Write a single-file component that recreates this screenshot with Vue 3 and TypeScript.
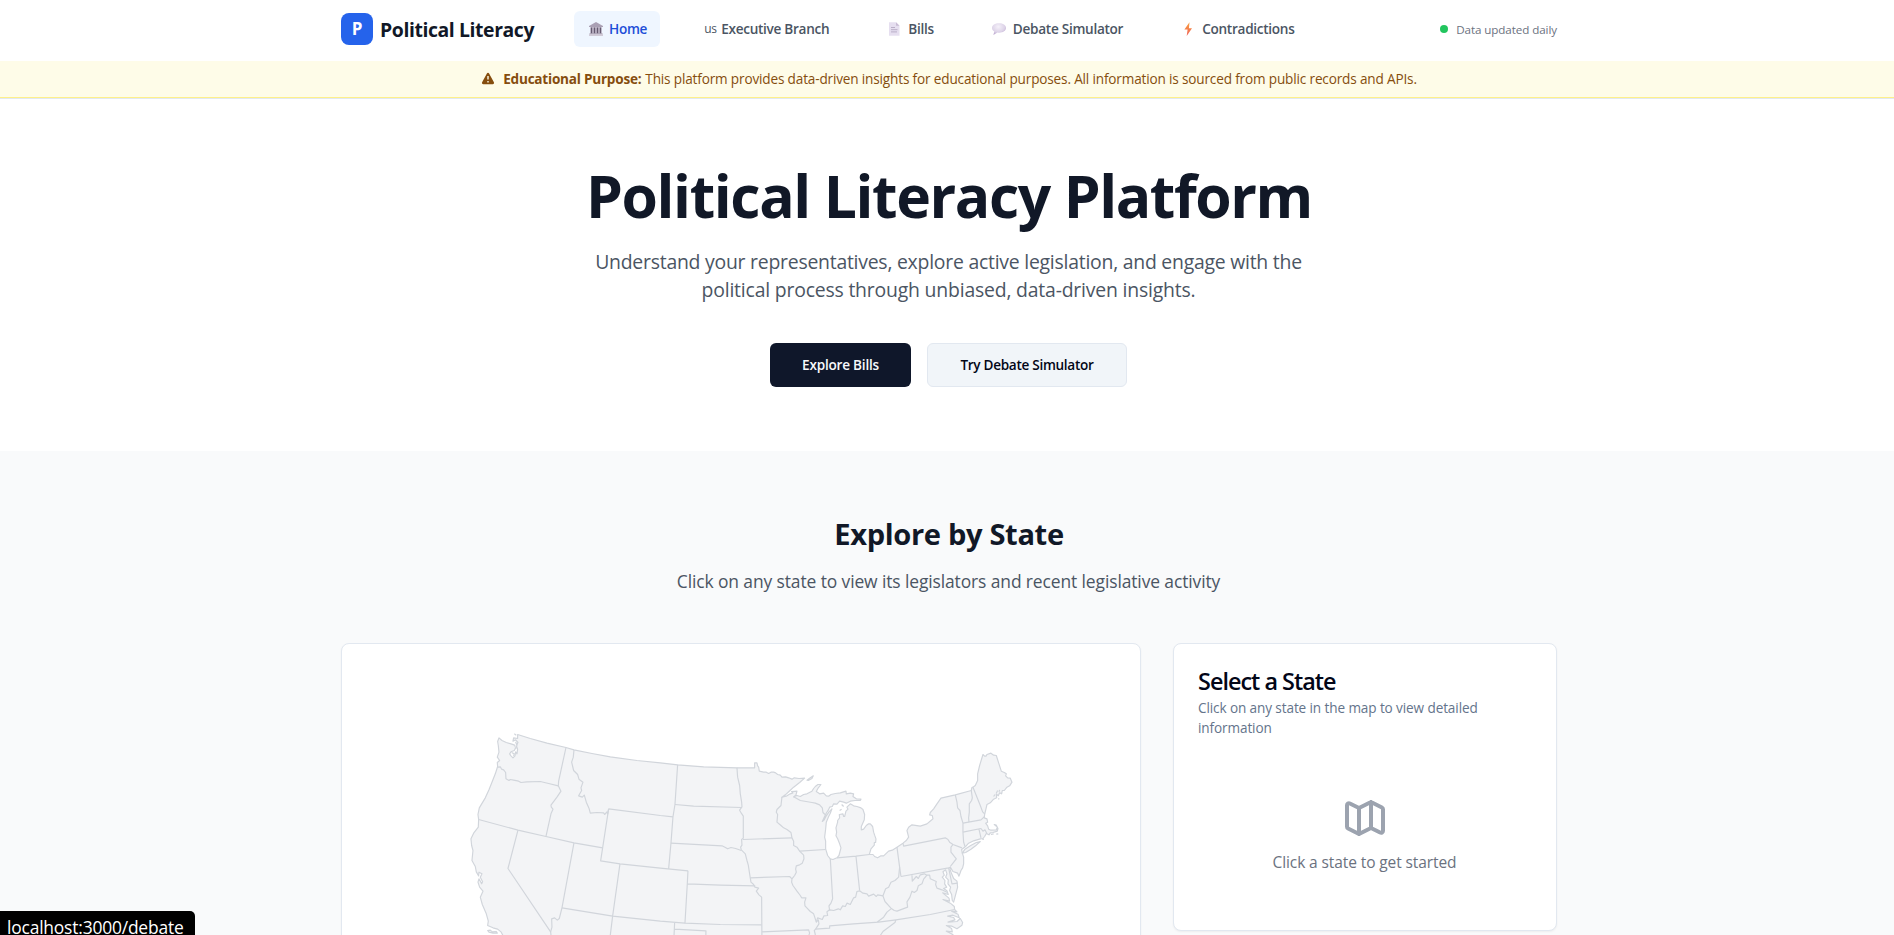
<script setup lang="ts">
interface NavItem {
  id: string
  label: string
  prefix?: string
  active?: boolean
}

const navItems: NavItem[] = [
  { id: 'home', label: 'Home', active: true },
  { id: 'executive', label: 'Executive Branch', prefix: 'us' },
  { id: 'bills', label: 'Bills' },
  { id: 'debate', label: 'Debate Simulator' },
  { id: 'contradictions', label: 'Contradictions' },
]

// Outline of the contiguous states, clockwise from the north-west corner.
const outline =
  'M172 72L210 84L260 98L317 111L341 118L395 129L450 139L530 150L600 157L652 163L730 169L830 172L883 172L883 157L890 157L892 166L895 170L897 182L910 185L918 185L925 189L932 185L940 185L946 187L952 192L960 194L965 200L976 199L985 202L995 206L1002 202L1016 204L1033 203L1018 216L1000 230L986 243L975 253L965 260L980 256L990 250L998 247L994 243L1010 242L1007 253L1000 259L1010 255L1020 258L1030 252L1040 250L1055 242L1060 234L1065 228L1073 222L1082 222L1074 232L1068 243L1078 250L1090 248L1098 256L1105 257L1112 252L1125 249L1140 247L1157 242L1158 250L1170 248L1180 250L1178 258L1188 265L1202 266L1200 270L1184 270L1170 272L1158 278L1150 275L1138 272L1130 281L1120 280L1116 288L1108 290L1104 299L1099 306L1094 316L1086 333L1092 328L1098 316L1106 304L1115 295L1110 308L1105 318L1098 335L1096 356L1093 380L1096 392L1096 415L1102 435L1110 445L1118 447L1130 442L1136 435L1142 412L1138 400L1132 385L1127 376L1129 365L1127 352L1132 335L1132 330L1138 322L1137 312L1148 310L1150 318L1153 318L1157 302L1163 296L1160 290L1170 280L1180 286L1190 288L1202 292L1208 297L1213 312L1212 328L1203 348L1203 358L1210 356L1218 345L1225 340L1230 340L1237 348L1240 365L1243 374L1247 385L1246 396L1242 396L1242 404L1232 415L1227 432L1238 432L1243 438L1252 442L1262 436L1270 436L1285 422L1296 419L1310 410L1328 398L1338 390L1345 380L1340 360L1345 350L1355 343L1380 347L1400 340L1412 330L1418 325L1416 315L1408 313L1410 306L1420 295L1430 280L1442 263L1485 253L1533 240L1535 231L1538 230L1545 225L1552 210L1552 190L1558 165L1568 132L1573 137L1577 137L1580 132L1592 128L1600 134L1608 135L1616 160L1623 182L1632 186L1638 190L1636 196L1642 202L1650 203L1655 215L1648 226L1640 230L1632 240L1626 240L1624 250L1618 247L1614 256L1608 250L1609 262L1600 266L1590 277L1580 282L1577 295L1573 312L1572 322L1580 325L1582 335L1576 338L1582 346L1585 356L1592 359L1608 358L1611 350L1602 342L1608 344L1613 354L1611 362L1598 366L1590 367L1586 373L1578 369L1573 378L1568 384L1560 385L1540 391L1525 398L1515 409L1504 417L1506 428L1510 440L1510 460L1507 472L1502 480L1500 486L1496 497L1492 488L1478 483L1470 470L1469 476L1474 490L1480 504L1490 512L1492 530L1488 545L1480 575L1476 570L1474 552L1468 540L1471 530L1463 520L1464 508L1456 500L1460 490L1456 478L1448 484L1452 494L1446 500L1454 510L1453 520L1459 530L1450 534L1460 541L1464 552L1447 547L1466 563L1468 572L1448 567L1470 578L1482 588L1483 597L1490 604L1474 602L1493 611L1497 622L1478 614L1462 617L1480 621L1484 628L1463 635L1490 633L1500 624L1507 636L1505 644L1490 655L1475 647L1458 645L1474 654L1476 664L1458 662L1478 672L1466 684L1450 720L150 720L128 675L122 664L112 656L98 652L82 645L84 632L78 610L66 582L60 560L68 542L58 530L53 515L56 505L64 520L67 514L60 500L65 490L56 485L55 496L48 484L45 468L35 450L38 420L34 405L32 385L40 368L54 350L55 327L53 312L57 292L75 262L86 238L95 215L105 190L112 168L111 156L118 150L111 140L116 125L114 105L112 93L116 82L125 90L138 96L152 100L163 104L166 112L162 120L152 124L148 130L152 136L158 142L164 136L166 124L170 130L172 116L168 106L173 96L166 88L158 92L160 82L172 84Z'

const islands = [
  'M1506 428L1514 416L1530 406L1548 396L1560 393L1548 404L1532 416L1516 426Z',
  'M1040 209L1050 202L1059 196L1055 204L1044 210Z',
  'M82 660L90 659L96 664L108 663L111 668L98 668L86 665Z',
  'M162 70L168 74M1592 372L1600 370M1608 371L1614 370M1566 387L1571 386M1614 264L1617 266M1144 282L1150 288M1138 300L1144 296',
  'M154 126L162 130L160 137M166 94L170 104L166 116M1608 248L1612 240M1616 244L1618 238M1600 258L1604 252',
]

const borders = [
  // Pacific and mountain states
  'M317 111L295 212L294 226L302 242L290 260L272 284L273 290L278 296L272 310L257 378',
  'M113 170L120 169L124 176L130 178L136 186L137 205L146 210L150 207L160 209L175 212L182 216L200 214L240 213L265 219L294 226',
  'M55 327L173 359L257 378L341 397L427 412',
  'M173 359L143 474L271 664L275 700',
  'M341 397L305 592L297 624L291 629L283 622L274 625L275 650L271 664',
  'M341 118L339 140L334 155L340 180L352 192L356 206L368 215L362 232L364 240L355 256L366 260L372 254L378 275L386 293L390 308L410 306L430 307L433 312L440 304L442 311L445 295',
  'M445 295L600 315L638 319M445 295L427 412L421 451L479 460L600 473L683 481',
  'M652 163L644 282L638 319L632 398L625 475M479 460L457 617L448 690',
  'M305 592L457 617L600 632L674 638L780 642L904 643',
  // Great Plains
  'M644 282L700 287L844 291M632 398L785 406L794 410L802 415L812 411L826 414L843 420M683 481L681 520L674 638M681 520L780 524L885 526',
  'M643 637L640 700M643 656L737 661L736 700',
  'M830 172L832 200L838 225L840 250L844 275L845 289L838 299L843 308L849 317L849 383L844 387L845 404L841 410L843 418',
  'M848 387L995 382M870 502L988 498L995 505',
  'M843 418L855 430L860 450L864 464L868 490L872 515L880 522L884 530L895 533L888 542L896 553L904 560L905 700M905 664L1045 658L1048 668L1040 690',
  // Upper Midwest and the Mississippi
  'M965 259L962 285L950 297L948 305L952 312L950 335L962 345L970 352L980 357L992 366L995 382L1000 392L1000 405L1010 410L1018 422L1030 434L1031 445L1026 458L1018 463L1008 466L1006 476L1008 485L1003 495L995 505L994 515L998 525L1010 542L1020 555L1024 562L1037 562L1033 575L1034 586L1050 603L1060 610L1064 622L1068 635L1074 628L1076 640L1066 656L1062 660L1065 672L1058 700',
  'M1018 422L1096 417M1000 259L1020 270L1055 276L1065 278L1078 283L1086 292L1088 306L1094 312',
  'M1110 445L1117 565L1112 578L1106 586L1108 600M1187 437L1198 540M1130 442L1187 437L1227 432M1310 410L1318 470L1322 498',
  'M1068 635L1072 622L1086 627L1091 616L1102 615L1100 604L1108 598L1120 600L1134 595L1140 598L1147 586L1155 588L1160 578L1170 582L1180 562L1186 560L1190 543L1198 541L1208 548L1220 550L1225 557L1240 551L1248 558L1252 553L1268 556L1276 535L1285 530L1292 515L1304 510L1315 500L1318 470',
  // Appalachia and the Mid-Atlantic
  'M1268 556L1274 573L1292 593L1302 600L1310 602L1328 595L1342 590L1340 574L1349 560L1355 542L1362 546L1370 540L1374 526L1385 520L1390 506L1400 494',
  'M1292 595L1280 605L1270 620L1250 635M1065 656L1108 653L1108 646L1180 640L1255 635L1307 628L1410 612L1483 597M1307 628L1304 636L1285 650L1268 663L1250 690',
  'M1328 398L1330 407L1455 382L1463 387L1468 395L1478 402L1505 412M1478 402L1472 410L1472 425L1488 445L1478 458L1470 468',
  'M1322 498L1465 472L1469 470M1465 472L1475 520L1492 518M1355 494L1356 512L1368 498L1374 504L1380 493L1392 490L1400 494L1408 494L1410 505L1428 513L1426 522L1430 533L1445 538L1460 545',
  // New England
  'M1485 253L1490 275L1492 292L1499 300L1502 318L1508 338L1508 365L1510 395L1514 408M1533 240L1536 262L1534 270L1527 280L1527 305L1525 322L1526 335',
  'M1508 338L1562 328L1573 318M1508 365L1562 354L1568 362L1574 358L1580 370M1556 356L1562 382M1538 230L1560 285L1567 304L1573 310',
]
</script>

<template>
  <div class="app">
    <div class="page">
      <header class="header">
        <div class="container header-row">
          <div class="brand">
            <span class="brand-mark">P</span>
            <span class="brand-name">Political Literacy</span>
          </div>
          <nav class="nav">
            <a v-for="item in navItems" :key="item.id" class="nav-item" :class="{ active: item.active }">
              <span v-if="item.prefix" class="nav-prefix">{{ item.prefix }}</span>
              <svg v-else-if="item.id === 'home'" class="nav-icon" viewBox="0 0 19 16">
                <path d="M3 6V5l7-4 7 4v1z" fill="#aaa0b4" />
                <path d="M4.500 6h11v6.500h-11z" fill="#c8c0d0" />
                <path d="M5.500 6.500v6M8.500 6.500v6M11.500 6.500v6M14.500 6.500v6" stroke="#655a70" stroke-width="1.500" />
                <path d="M3.500 12.300h13v1h-13z" fill="#a59bac" />
                <path d="M3 13.300h14v1.500H3z" fill="#c9c1cd" />
              </svg>
              <svg v-else-if="item.id === 'bills'" class="nav-icon" viewBox="0 0 19 16">
                <path d="M4 1.200h7l3.500 3.600v9.900H4z" fill="#e6dff0" />
                <path d="M11 1.200v3.600h3.500z" fill="#c9bdd5" />
                <path d="M6 6.500h4M6 8.700h6.500M6 10.900h6" stroke="#b9aec7" />
              </svg>
              <svg v-else-if="item.id === 'debate'" class="nav-icon" viewBox="0 0 19 16">
                <defs>
                  <radialGradient id="bubble" cx=".45" cy=".3" r=".7">
                    <stop offset="0" stop-color="#f5f1f9" />
                    <stop offset=".65" stop-color="#ddd3e8" />
                    <stop offset="1" stop-color="#b9a4cc" />
                  </radialGradient>
                </defs>
                <path d="M9 2.300c4 0 7 2 7 4.700s-3 4.700-7 4.700l-1.600-.1-4 2.400.9-3.500C2.800 9.600 2 8.400 2 7c0-2.700 3-4.700 7-4.700z" fill="url(#bubble)" />
              </svg>
              <svg v-else class="nav-icon" viewBox="0 0 19 16">
                <defs>
                  <linearGradient id="bolt" x1="0" y1="0" x2="0" y2="1">
                    <stop offset="0" stop-color="#f9a13c" />
                    <stop offset="1" stop-color="#f0605a" />
                  </linearGradient>
                </defs>
                <path d="M10.500 1.200 5.400 8.500h3.200L7.700 15 13 7.300H9.900z" fill="url(#bolt)" />
              </svg>
              <span>{{ item.label }}</span>
            </a>
          </nav>
          <div class="status"><i class="dot"></i><span>Data updated daily</span></div>
        </div>
      </header>

      <div class="notice">
        <svg class="notice-icon" viewBox="0 0 14 14">
          <path d="M7 .8c.5 0 .9.200 1.100.6l4.800 8.800c.5.900-.1 2-1.200 2H2.300c-1.100 0-1.700-1.100-1.200-2l4.800-8.800c.2-.4.6-.6 1.100-.6z" fill="#854d0e" />
          <path d="M7 4v3.600M7 9v1.400" stroke="#fefce8" stroke-width="1.400" />
        </svg>
        <strong>Educational Purpose:</strong>
        <span>This platform provides data-driven insights for educational purposes. All information is sourced from public records and APIs.</span>
      </div>

      <section class="hero">
        <h1>Political Literacy Platform</h1>
        <p>
          <span class="lead-a">Understand your representatives, explore active legislation, and engage with the</span><br />
          <span>political process through unbiased, data-driven insights.</span>
        </p>
        <div class="actions">
          <button class="btn primary">Explore Bills</button>
          <button class="btn secondary">Try Debate Simulator</button>
        </div>
      </section>

      <section class="explore">
        <div class="container">
          <h2>Explore by State</h2>
          <p class="sub">Click on any state to view its legislators and recent legislative activity</p>
          <div class="grid">
            <div class="card map-card">
              <svg class="map" viewBox="366 668 750 480">
                <g transform="translate(460.300 710.500) scale(.33333)">
                  <path class="land" :d="outline" />
                  <path v-for="d in islands" :key="d" class="land" :d="d" />
                  <path v-for="d in borders" :key="d" class="border" :d="d" />
                </g>
              </svg>
            </div>
            <aside class="card select-card">
              <h3>Select a State</h3>
              <p class="desc">Click on any state in the map to view detailed information</p>
              <div class="empty">
                <svg viewBox="0 0 24 24">
                  <path d="M9 20l-5.447-2.724A1 1 0 013 16.382V5.618a1 1 0 011.447-.894L9 7m0 13l6-3m-6 3V7m6 10l4.553 2.276A1 1 0 0021 18.382V7.618a1 1 0 00-.553-.894L15 4m0 13V4m0 0L9 7" />
                </svg>
                <p>Click a state to get started</p>
              </div>
            </aside>
          </div>
        </div>
      </section>
    </div>
    <div class="link-status">localhost:3000/debate</div>
  </div>
</template>

<style>
body {
  margin: 0;
  background: #fff;
}
</style>

<style scoped>
.app {
  position: relative;
  height: 935px;
  overflow: hidden;
  font-family: "Open Sans", "Noto Sans", sans-serif;
  color: #111827;
}
.page {
  width: 1898px;
}
.container {
  width: 1216px;
  margin: 0 auto;
}
h1, h2, h3, p {
  margin: 0;
}
.header {
  height: 61px;
  background: #fff;
}
.header-row {
  height: 58px;
  display: flex;
  align-items: center;
}
.brand {
  display: flex;
  align-items: center;
  width: 233px;
}
.brand-mark {
  width: 32px;
  height: 32px;
  border-radius: 8px;
  background: #2563eb;
  color: #fff;
  font-weight: 700;
  font-size: 17px;
  line-height: 32px;
  text-align: center;
}
.brand-name {
  margin-left: 7px;
  font-size: 19.400px;
  line-height: 28px;
  font-weight: 700;
  letter-spacing: -0.400px;
  white-space: nowrap;
  padding-top: 2px;
}
.nav {
  display: flex;
  gap: 32px;
}
.nav-item {
  display: flex;
  align-items: center;
  box-sizing: border-box;
  height: 36px;
  padding: 0 12px;
  border-radius: 6px;
  font-size: 13.600px;
  line-height: 20px;
  font-weight: 600;
  letter-spacing: -0.290px;
  color: #4b5563;
  white-space: nowrap;
}
.nav-item.active {
  background: #eff6ff;
  color: #1d4ed8;
  padding-right: 13px;
}
.nav-icon {
  width: 19px;
  height: 16px;
  margin-right: 4px;
}
.nav-prefix {
  width: 13px;
  margin-right: 4px;
  font-size: 12px;
  font-weight: 400;
}
.status {
  margin-left: auto;
  display: flex;
  align-items: center;
  gap: 8px;
  font-size: 11.640px;
  letter-spacing: -0.090px;
  line-height: 16px;
  color: #6b7280;
}
.status span {
  padding-top: 1px;
}
.dot {
  width: 8px;
  height: 8px;
  border-radius: 50%;
  background: #22c55e;
}
.notice {
  height: 36px;
  display: flex;
  align-items: center;
  justify-content: center;
  background: #fefce8;
  border-bottom: 1px solid #fef08a;
  box-shadow: 0 1px 0 #e2e8f0;
  margin-bottom: 1px;
  font-size: 13.580px;
  line-height: 20px;
  letter-spacing: -0.159px;
  color: #854d0e;
}
.notice-icon {
  width: 14px;
  height: 14px;
  margin-right: 8px;
}
.notice strong {
  margin-right: 4px;
  letter-spacing: -0.233px;
}
.hero {
  height: 352px;
  box-sizing: border-box;
  padding-top: 66px;
  text-align: center;
}
.hero h1 {
  font-size: 58.800px;
  line-height: 60px;
  letter-spacing: -1.400px;
  font-weight: 700;
}
.hero p {
  margin-top: 23px;
  margin-left: -1px;
  font-size: 19.400px;
  line-height: 28px;
  letter-spacing: -0.190px;
  color: #4b5563;
}
.lead-a {
  letter-spacing: -0.235px;
}
.actions {
  margin-top: 39px;
  margin-left: -1px;
  display: flex;
  justify-content: center;
  gap: 16px;
}
.btn {
  box-sizing: border-box;
  height: 44px;
  padding: 0;
  border: 0;
  border-radius: 6px;
  font: 600 13.580px/20px "Open Sans", "Noto Sans", sans-serif;
}
.primary {
  width: 141px;
  background: #0f172a;
  color: #f8fafc;
  letter-spacing: -0.217px;
}
.secondary {
  width: 200px;
  background: #f1f5f9;
  border: 1px solid #e2e8f0;
  color: #020617;
  letter-spacing: -0.305px;
}
.explore {
  height: 720px;
  padding-top: 64px;
  background: #f9fafb;
  text-align: center;
}
h2 {
  padding-top: 1px;
  font-size: 29.100px;
  line-height: 36px;
  letter-spacing: -0.340px;
  font-weight: 700;
}
.sub {
  margin-top: 15px;
  margin-left: -1px;
  font-size: 17.460px;
  line-height: 28px;
  letter-spacing: -0.112px;
  color: #4b5563;
}
.grid {
  margin-top: 48px;
  display: grid;
  grid-template-columns: 800px 384px;
  gap: 32px;
  align-items: start;
}
.card {
  box-sizing: border-box;
  background: #fff;
  border: 1px solid #e2e8f0;
  border-radius: 8px;
  box-shadow: 0 1px 2px rgba(0, 0, 0, 0.05);
  padding: 24px;
}
.map {
  display: block;
  width: 750px;
  height: 480px;
}
.land {
  fill: #f3f4f6;
  stroke: #d1d5db;
  stroke-width: 3.500;
  stroke-linejoin: round;
}
.border {
  fill: none;
  stroke: #d1d5db;
  stroke-width: 3.500;
  stroke-linejoin: round;
}
.select-card {
  height: 288px;
  text-align: left;
}
h3 {
  padding-top: 1px;
  font-size: 23.400px;
  line-height: 24px;
  font-weight: 600;
  letter-spacing: -0.980px;
  color: #020617;
}
.desc {
  margin-top: 5px;
  font-size: 13.580px;
  line-height: 20px;
  letter-spacing: -0.110px;
  color: #64748b;
}
.empty {
  margin-top: 24px;
  padding-top: 32px;
  text-align: center;
  color: #6b7280;
}
.empty svg {
  display: block;
  width: 48px;
  height: 48px;
  margin: 0 auto 8px;
  fill: none;
  stroke: #9ca3af;
  stroke-width: 2;
  stroke-linecap: round;
  stroke-linejoin: round;
}
.empty p {
  margin-left: -1px;
  font-size: 15.520px;
  line-height: 24px;
  letter-spacing: -0.108px;
}
.link-status {
  position: absolute;
  left: 0;
  bottom: 0;
  box-sizing: border-box;
  width: 195px;
  height: 24px;
  padding: 0 0 0 7px;
  border-radius: 0 5px 0 0;
  background: #000;
  color: #fff;
  font-size: 17.460px;
  line-height: 32px;
  letter-spacing: -0.200px;
  white-space: nowrap;
}
</style>
